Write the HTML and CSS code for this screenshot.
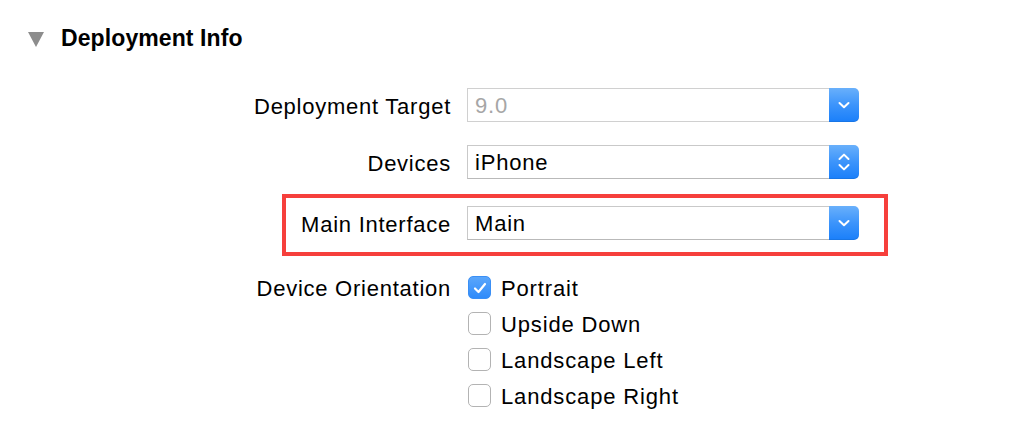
FILE: index.html
```html
<!DOCTYPE html>
<html>
<head>
<meta charset="utf-8">
<link rel="stylesheet" href="styles.css">
</head>
<body>
<div class="panel">
  <div class="section-header">
    <span class="disclosure"></span>
    <span class="section-title">Deployment Info</span>
  </div>
  <div class="form">
    <div class="row row-target">
      <div class="label">Deployment Target</div>
      <div class="popup disabled">
        <span class="popup-value">9.0</span>
        <span class="popup-btn">
          <svg width="14" height="10" viewBox="0 0 14 10"><path d="M2.5 3 L7 7.2 L11.5 3" fill="none" stroke="#fff" stroke-width="2" stroke-linecap="round" stroke-linejoin="round"/></svg>
        </span>
      </div>
    </div>
    <div class="row row-devices">
      <div class="label">Devices</div>
      <div class="popup">
        <span class="popup-value">iPhone</span>
        <span class="popup-btn">
          <svg width="14" height="22" viewBox="0 0 14 22"><path d="M2.5 8 L7 3.6 L11.5 8" fill="none" stroke="#fff" stroke-width="2" stroke-linecap="round" stroke-linejoin="round"/><path d="M2.5 14 L7 18.4 L11.5 14" fill="none" stroke="#fff" stroke-width="2" stroke-linecap="round" stroke-linejoin="round"/></svg>
        </span>
      </div>
    </div>
    <div class="row row-main highlighted">
      <div class="label">Main Interface</div>
      <div class="popup">
        <span class="popup-value">Main</span>
        <span class="popup-btn">
          <svg width="14" height="10" viewBox="0 0 14 10"><path d="M2.5 3 L7 7.2 L11.5 3" fill="none" stroke="#fff" stroke-width="2" stroke-linecap="round" stroke-linejoin="round"/></svg>
        </span>
      </div>
    </div>
    <div class="row row-orientation">
      <div class="label">Device Orientation</div>
      <div class="checks">
        <label class="check"><span class="box checked"><svg width="16" height="14" viewBox="0 0 16 14"><path d="M3 7.5 L6.5 11 L13 3" fill="none" stroke="#fff" stroke-width="2.2" stroke-linecap="round" stroke-linejoin="round"/></svg></span><span class="check-label">Portrait</span></label>
        <label class="check"><span class="box"></span><span class="check-label">Upside Down</span></label>
        <label class="check"><span class="box"></span><span class="check-label">Landscape Left</span></label>
        <label class="check"><span class="box"></span><span class="check-label">Landscape Right</span></label>
      </div>
    </div>
  </div>
</div>
</body>
</html>
```

FILE: styles.css
```css
html, body {
  margin: 0;
  padding: 0;
  background: #ffffff;
}

body {
  width: 1032px;
  height: 440px;
  overflow: hidden;
  font-family: "Liberation Sans", Arial, sans-serif;
  color: #000;
}

.panel {
  padding-top: 28px;
}

.section-header {
  display: flex;
  align-items: center;
  height: 20px;
  padding-left: 28px;
}

.disclosure {
  width: 0;
  height: 0;
  border-left: 8px solid transparent;
  border-right: 8px solid transparent;
  border-top: 15px solid #8d8d8d;
  margin-right: 17px;
  margin-top: 2px;
}

.section-title {
  font-weight: bold;
  font-size: 23px;
  letter-spacing: 0.1px;
}

.form {
  display: flex;
  flex-direction: column;
  margin-top: 40px;
}

.row {
  display: flex;
  align-items: center;
  position: relative;
}

.label {
  text-align: right;
  font-size: 22px;
  padding-right: 16px;
  padding-top: 4px;
  box-sizing: border-box;
  width: 467px;
  flex-shrink: 0;
  letter-spacing: 0.75px;
}

.row-devices {
  margin-top: 23px;
}

.row-main {
  margin-top: 27px;
}

.highlighted::after {
  content: "";
  position: absolute;
  left: 282px;
  top: -12px;
  width: 598px;
  height: 54px;
  border: 4px solid #f63f3c;
}

.popup {
  width: 392px;
  height: 34px;
  display: flex;
  align-items: stretch;
  box-sizing: border-box;
}

.popup-value {
  flex: 1;
  display: flex;
  align-items: center;
  padding-left: 7px;
  padding-top: 2px;
  font-size: 22px;
  letter-spacing: 0.8px;
  border: 1px solid #c9c9c9;
  border-bottom-color: #b9b9b9;
  border-right: none;
  background: #fff;
}

.popup.disabled .popup-value {
  color: #a6a6a6;
  border-color: #d0d0d0;
}

.popup-btn {
  width: 30px;
  display: flex;
  align-items: center;
  justify-content: center;
  background: linear-gradient(to bottom, #69b0fb 0%, #3c94fb 50%, #1a7ffa 100%);
  border-radius: 0 5px 5px 0;
  box-shadow: inset 0 -1px 0 rgba(0,0,0,0.08);
}

.row-orientation {
  margin-top: 36px;
  align-items: flex-start;
}

.row-orientation .label {
  line-height: 24px;
  padding-top: 1px;
}

.checks {
  display: flex;
  flex-direction: column;
  gap: 13px;
}

.check {
  display: flex;
  align-items: center;
  height: 23px;
}

.box {
  width: 23px;
  height: 23px;
  box-sizing: border-box;
  border: 1px solid #b3b3b3;
  border-radius: 5px;
  background: #fff;
  margin-left: 1px;
  margin-right: 10px;
  display: flex;
  align-items: center;
  justify-content: center;
}

.box.checked {
  background: linear-gradient(to bottom, #5aa6fb, #2f8bfa);
  border-color: #3a8ff5;
}

.check-label {
  font-size: 22px;
  letter-spacing: 0.85px;
  padding-top: 2px;
}
```
